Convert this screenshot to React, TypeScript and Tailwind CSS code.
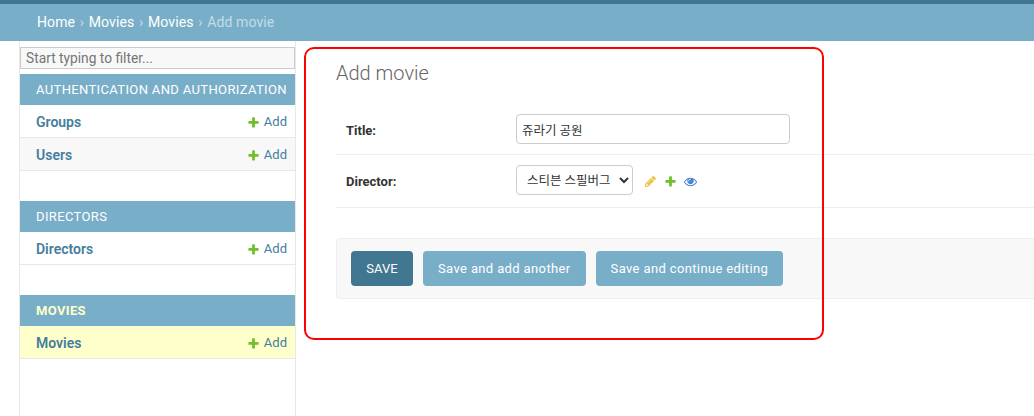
const fontStack = "font-['Roboto','Noto_Sans_CJK_KR',sans-serif]";

const AddIcon = () => (
  <svg viewBox="0 0 1792 1792" className="w-[13px] h-[13px]">
    <path
      fill="#70bf2b"
      d="M1600 796v192q0 40-28 68t-68 28h-416v416q0 40-28 68t-68 28h-192q-40 0-68-28t-28-68v-416h-416q-40 0-68-28t-28-68v-192q0-40 28-68t68-28h416v-416q0-40 28-68t68-28h192q40 0 68 28t28 68v416h416q40 0 68 28t28 68z"
    />
  </svg>
);

const PencilIcon = () => (
  <svg viewBox="0 0 1792 1792" className="w-[13px] h-[13px]">
    <path
      fill="#efc04a"
      d="M491 1536l91-91-235-235-91 91v107h128v128h107zm523-928q0-22-22-22-10 0-17 7l-542 542q-7 7-7 17 0 22 22 22 10 0 17-7l542-542q7-7 7-17zm-54-192l416 416-832 832h-416v-416zm683 96q0 53-37 90l-166 166-416-416 166-165q36-38 90-38 53 0 91 38l235 234q37 39 37 91z"
    />
  </svg>
);

const EyeIcon = () => (
  <svg viewBox="0 0 1792 1792" className="w-[13px] h-[13px]">
    <path
      fill="#4a86cc"
      d="M1664 960q-152-236-381-353 61 104 61 225 0 185-131.500 316.500t-316.500 131.500-316.500-131.500-131.500-316.500q0-121 61-225-229 117-381 353 133 205 333.500 326.500t434.500 121.500 434.500-121.500 333.500-326.500zm-720-384q0-20-14-34t-34-14q-125 0-214.500 89.500t-89.500 214.500q0 20 14 34t34 14 34-14 14-34q0-86 61-147t147-61q20 0 34-14t14-34zm848 384q0 34-20 69-140 230-376.500 368.500t-499.500 138.500-499.500-139-376.500-368q-20-35-20-69t20-69q140-229 376.500-368t499.500-139 499.500 139 376.500 368q20 35 20 69z"
    />
  </svg>
);

const Caption = ({ title, current }: { title: string; current?: boolean }) => (
  <div
    className={`h-[31px] bg-[#79aec8] pl-4 flex items-center text-[13px] tracking-[0.36px] whitespace-nowrap ${
      current ? 'text-[#ffc] font-bold' : 'text-white'
    }`}
  >
    {title}
  </div>
);

const ModelRow = ({ name, bg }: { name: string; bg: string }) => (
  <div className={`h-[33px] border-b border-[#e8e8e8] pl-4 pr-[8px] pt-[2px] flex items-center justify-between text-[#447e9b] ${bg}`}>
    <span className="font-semibold text-[14px]">{name}</span>
    <span className="flex items-center gap-[4px] text-[13px]">
      <AddIcon />
      Add
    </span>
  </div>
);

const SubmitButton = ({ label, primary }: { label: string; primary?: boolean }) => (
  <button
    className={`h-[35px] rounded-[4px] text-white text-[13px] ${
      primary ? 'w-[62px] bg-[#417690]' : 'px-[15px] tracking-[0.37px] bg-[#79aec8]'
    }`}
  >
    {label}
  </button>
);

const Sep = () => <span className="mx-[4.7px] text-[#c4dce8]">›</span>;

export default function App() {
  return (
    <div className={`relative h-[416px] overflow-hidden bg-white ${fontStack}`}>
      <div className="h-[41px] border-t-4 border-[#417690] bg-[#79aec8] pl-[37px] flex items-center text-[14px] tracking-[0.1px] text-white">
        <span>Home</span>
        <Sep />
        <span>Movies</span>
        <Sep />
        <span>Movies</span>
        <Sep />
        <span className="text-[#c4dce8]">Add movie</span>
      </div>

      <div className="flex h-[375px]">
        <aside className="ml-[19px] w-[277px] shrink-0 border-x border-[#e8e8e8] pt-[6px]">
          <input
            placeholder="Start typing to filter..."
            className="w-full h-[22px] border border-[#ccc] bg-[#f8f8f8] px-[5px] text-[13.75px] text-[#333] placeholder:text-[#757575] outline-none block"
          />
          <div className="mt-[5px] mb-[30px]">
            <Caption title="AUTHENTICATION AND AUTHORIZATION" />
            <ModelRow name="Groups" bg="bg-white" />
            <ModelRow name="Users" bg="bg-[#f8f8f8]" />
          </div>
          <div className="mb-[30px]">
            <Caption title="DIRECTORS" />
            <ModelRow name="Directors" bg="bg-white" />
          </div>
          <div>
            <Caption title="MOVIES" current />
            <ModelRow name="Movies" bg="bg-[#ffc]" />
          </div>
        </aside>

        <main className="flex-1 min-w-0 pl-10">
          <h1 className="h-[63px] pt-[20px] text-[20px] leading-[24px] font-light text-[#666]">Add movie</h1>

          <div className="h-[51px] border-b border-[#eee] pl-[10px] flex items-center">
            <label className="w-[170px] pt-[4px] text-[13px] font-bold text-[#333]">Title:</label>
            <input
              defaultValue="쥬라기 공원"
              className="w-[274px] h-[30px] border border-[#ccc] rounded-[4px] px-[5px] text-[12.5px] text-[#333] outline-none"
            />
          </div>

          <div className="h-[53px] border-b border-[#eee] pl-[10px] pb-[2px] flex items-center">
            <label className="w-[170px] pt-[4px] text-[13px] font-bold text-[#333]">Director:</label>
            <select className="w-[117px] h-[30px] border border-[#ccc] rounded-[4px] px-[6px] text-[12.5px] text-[#333] bg-white outline-none">
              <option>스티븐 스필버그</option>
            </select>
            <span className="ml-[11px] pt-[2px] flex items-center gap-[7px]">
              <PencilIcon />
              <AddIcon />
              <EyeIcon />
            </span>
          </div>

          <div className="mt-[30px] h-[61px] border border-r-0 border-[#eee] rounded-l-[4px] bg-[#f8f8f8] pl-[14px] flex items-center gap-[10px]">
            <SubmitButton label="SAVE" primary />
            <SubmitButton label="Save and add another" />
            <SubmitButton label="Save and continue editing" />
          </div>
        </main>
      </div>

      <div className="absolute left-[304px] top-[47px] w-[520px] h-[293px] border-2 border-[#f00] rounded-[10px] pointer-events-none" />
    </div>
  );
}
